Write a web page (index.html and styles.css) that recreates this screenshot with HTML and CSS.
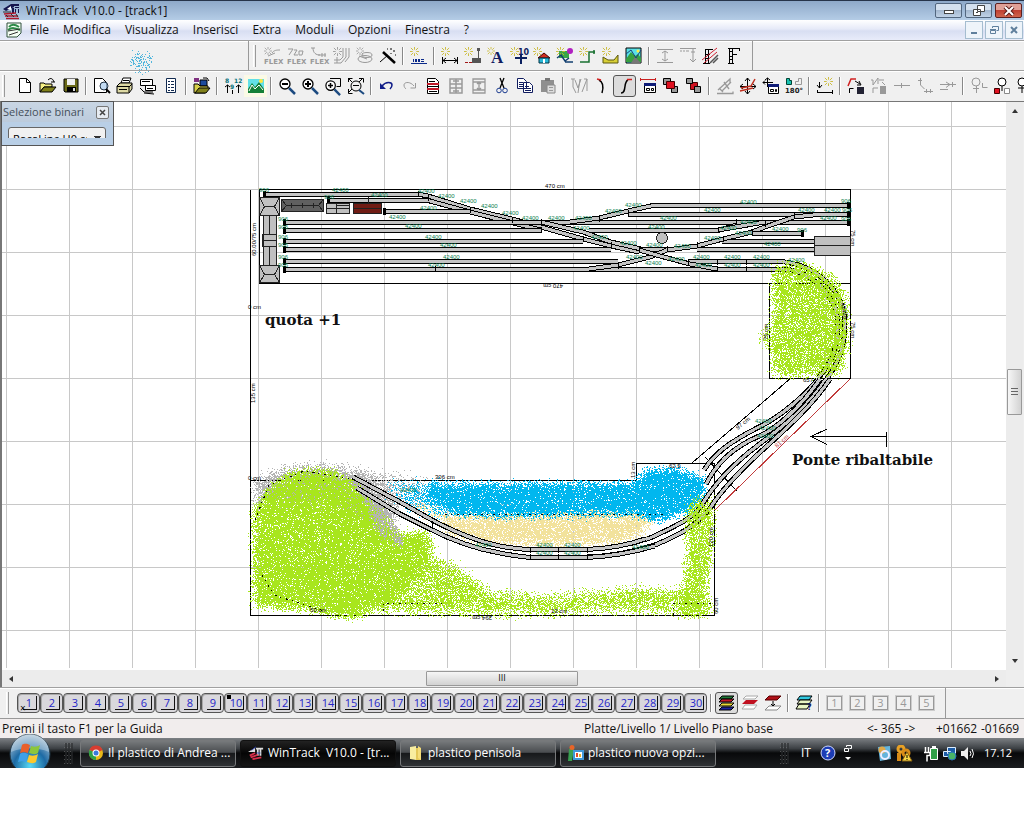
FILE: index.html
```html
<!DOCTYPE html>
<html lang="it">
<head>
    <meta charset="UTF-8">
    <meta name="viewport" content="width=device-width, initial-scale=1"/>
    <title>WinTrack V10.0 - [track1]</title>
    <link rel="stylesheet" href="styles.css">
</head>
<body>

<!-- shared icon pieces -->
<svg class="defs">
    <symbol id="spark" viewBox="0 0 10 10"><path fill="none" d="M5 0v3M5 7v3M0 5h3M7 5h3M1 1l2.500 2.500M6.500 6.500l2.500 2.500M9 1l-2.500 2.500M3.500 6.500l-2.500 2.500"/></symbol>
    <symbol id="logo" viewBox="0 0 18 18"><path d="M1 7l8-5 3 1 0 2-8 4zM9 2h8v2h-8zM10 6h2v5h-2zM13 5h4v1h-4zM13 7h1v4h-1zM16 7h1v4h-1z" fill="#15154d"/><path d="M5 7l4-3v4z" fill="#fff"/><path fill="none" d="M2 12l12-1M3 14h13M4 16.500h13" stroke="#b0182c" stroke-width="1.500"/><path fill="none" d="M1 10h8M4 13l2 2M9 12l3 3M14 12l2 3" stroke="#303030"/></symbol>
    <symbol id="lens" viewBox="0 0 18 18"><circle cx="7" cy="7" r="5" fill="#fff" stroke="#000" stroke-width="1.300"/><path fill="none" d="M11 11l6 6" stroke="#1c4a80" stroke-width="2.500"/></symbol>
</svg>

<div class="window">
    <header class="titlebar">
        <svg class="ico"><use href="#logo"/></svg>
        <h1>WinTrack&nbsp; V10.0 - [track1]</h1>
        <div class="winbtns">
            <button aria-label="Riduci"><svg width="12" height="10"><rect x="1.500" y="4.500" width="9" height="3" fill="#fff" stroke="#444"/></svg></button>
            <button aria-label="Ripristina"><svg width="12" height="11"><path d="M4.500 .5h7v6h-7zM.5 4.500h7v6h-7z" fill="#fff" stroke="#444"/><path d="M3 7h2v1h-2z" fill="#444"/></svg></button>
            <button class="close" aria-label="Chiudi"><svg width="12" height="10"><path d="M2 1l8 8M10 1l-8 8" stroke="#5b1a18" stroke-width="4"/><path d="M2 1l8 8M10 1l-8 8" stroke="#fff" stroke-width="2"/></svg></button>
        </div>
    </header>

    <nav class="menubar">
        <svg class="ico" viewBox="0 0 18 18"><path d="M1 2h14v10l-4 4h-10z" fill="#f4fff4" stroke="#30503c"/><path class="ln" d="M3 6c3-4 7-2 10 0M2 9c4-3 7-2 12 0" stroke="#2c8a48" stroke-width="2"/><path class="ln" d="M2 10l12-2M3 14l9-3" stroke="#333"/></svg>
        <a href="#">File</a>
        <a href="#">Modifica</a>
        <a href="#">Visualizza</a>
        <a href="#">Inserisci</a>
        <a href="#">Extra</a>
        <a href="#">Moduli</a>
        <a href="#">Opzioni</a>
        <a href="#">Finestra</a>
        <a href="#">?</a>
        <div class="mdibtns">
            <button aria-label="Riduci documento"><svg width="10" height="10"><path class="ln" d="M2 8h6" stroke="#5f7f9c" stroke-width="2"/></svg></button>
            <button aria-label="Ripristina documento"><svg width="10" height="10"><path class="ln" d="M3.500 3v-1.500h6v4h-2M1.500 5.500h5v3h-5zM1 4.500h6" stroke="#5f7f9c"/></svg></button>
            <button aria-label="Chiudi documento"><svg width="10" height="10"><path class="ln" d="M2 2l6 6M8 2l-6 6" stroke="#5f7f9c" stroke-width="2"/></svg></button>
        </div>
    </nav>

    <div class="toolbar band">
        <div class="empty"></div>
        <i class="grip"></i>
        <button class="off" aria-label="Flex 1"><svg class="ico"><use href="#spark" width="8" height="8"/><path class="ln" d="M8 6c2-3 5-3 8-3M4 9l7-3"/><text x="0" y="17">FLEX</text></svg></button>
        <button class="off" aria-label="Flex 2"><svg class="ico"><path class="ln" d="M1 2h5l-4 6M7 3h3l-3 5h4M12 4h4l-1 4h-3z"/><text x="0" y="17">FLEX</text></svg></button>
        <button class="off" aria-label="Flex 3"><svg class="ico"><path class="ln" d="M1 1h4M3 1c0 5 3 7 7 7M8 8h8M12 6v4M15 6v4"/><text x="0" y="17">FLEX</text></svg></button>
        <button class="off" aria-label="Binari paralleli"><svg class="ico"><use href="#spark" width="9" height="9"/><path class="ln" d="M10 1v9l-3 3h-6M13 1v9l-5 6h-7M16 1v9l-4 5M4 10v6"/></svg></button>
        <button class="off" aria-label="Elicoidale"><svg class="ico"><use href="#spark" width="8" height="8"/><ellipse class="ln" cx="11" cy="8" rx="5" ry="2.500"/><ellipse class="ln" cx="9" cy="12" rx="7" ry="3.500"/><path class="ln" d="M3 9l8 3"/></svg></button>
        <button aria-label="Bacchetta"><svg class="ico"><path class="ln" d="M4 5l12 11" stroke-width="2.500"/><path class="ln" d="M1 15l8-7M12 1v2M15 3v2M12 6v1M8 2h1M16 8h1"/></svg></button>
        <i class="sep"></i>
        <button aria-label="Inserisci quota"><svg class="ico"><use href="#spark" class="sun" width="9" height="9"/><path d="M3 12h1v3h-1zM5 12h2v3h-2zM8 12h2v3h-2zM11 12h3v1h-3zM11 14h3v1h-3z" fill="#0b2a8a"/><path class="ln" d="M1 16.500h16" stroke="#0b2a8a"/></svg></button>
        <i class="sep"></i>
        <button aria-label="Misura"><svg class="ico"><use href="#spark" class="sun" width="9" height="9"/><path class="ln" d="M1.500 10v7M16.500 10v7M2 13.500h14M5 11l-3 2.500 3 2.500M13 11l3 2.500-3 2.500"/></svg></button>
        <button aria-label="Segnale"><svg class="ico"><use href="#spark" class="sun" width="9" height="9"/><path d="M13 1h3v3h-3zM14 4h1v7h-1zM8 11h9v5h-9z" fill="#555"/><path class="ln" d="M1 15.500h7" stroke="#a01818" stroke-dasharray="3 1"/></svg></button>
        <button aria-label="Testo"><svg class="ico"><use href="#spark" class="sun" width="8" height="8"/><text class="big" x="4" y="16">A</text></svg></button>
        <button aria-label="Altezza"><svg class="ico"><use href="#spark" class="sun" width="9" height="9"/><text class="num" x="8" y="8">10</text><path class="ln" d="M5 11h12M11 8v9" stroke="#0b2060" stroke-width="2"/></svg></button>
        <button aria-label="Edificio"><svg class="ico"><use href="#spark" class="sun" width="9" height="9"/><path d="M5 11l6-5 6 5z" fill="#d03020" stroke="#400"/><path d="M6 11h10v5h-10z" fill="#28b8d8" stroke="#034"/><path d="M10 12h2v4h-2z" fill="#fff"/></svg></button>
        <button aria-label="Paesaggio"><svg class="ico"><path d="M3 4h10v7h-10z" fill="#38a848"/><use href="#spark" class="sun" width="9" height="9"/><circle cx="14" cy="4" r="3" fill="#b020c0"/><path class="ln" d="M1 11l4-3 4 6 4-3M9 15h8" stroke="#123f70" stroke-width="1.500"/></svg></button>
        <button aria-label="Linea"><svg class="ico"><use href="#spark" class="sun" width="9" height="9"/><path class="ln" d="M3 15h7v-10h6M1 15h3M15 3v4" stroke="#187030" stroke-width="1.500"/></svg></button>
        <button aria-label="Terreno"><svg class="ico"><path d="M1 16v-6l5 3 6 0 4-5v8z" fill="#d8cf36" stroke="#5c5810"/><use href="#spark" class="sun" width="9" height="9"/></svg></button>
        <button aria-label="Immagine"><svg class="ico"><path d="M1 1h15v15h-15z" fill="#58e0e8" stroke="#000"/><path d="M1 12l5-7 4 4 3-2 3 4v4h-15z" fill="#38a040"/><path d="M6 16l4-6 6 6z" fill="#777"/><path class="ln" d="M1 7l5-4 5 8 5-8" stroke="#1a407a"/><circle cx="13" cy="4" r="1.500" fill="#ffed40"/></svg></button>
        <i class="sep"></i>
        <button class="off" aria-label="Quota verticale"><svg class="ico"><path class="ln" d="M1 2.500h16M1 15.500h16M9 4v10M6 6l3-2 3 2M6 12l3 2 3-2"/></svg></button>
        <button class="off" aria-label="Quota bordo"><svg class="ico"><path class="ln" d="M1 1.500h16M1 4h2M4 4h2M7 4h3M14 2v13M12 5h4M11 12l3 3 3-3"/></svg></button>
        <button aria-label="Mostra altezze"><svg class="ico"><path class="ln" d="M3.500 2v14M6.500 2v14M1 16.500h7M3 2.500h8M3 7.500h5M3 11.500h3"/><path class="ln" d="M0 13l15-12M2 16l13-11" stroke="#d02030"/><path class="ln" d="M8 16l8-8M11 16l5-5" stroke="#555" stroke-width="1.500"/></svg></button>
        <button aria-label="Altezza binario"><svg class="ico"><path class="ln" d="M4.500 2v15M7.500 2v15M3 1.500h12M14.500 1v3M7 7.500h5M3 16.500h6M4 4.500h3M4 9.500h3M4 12.500h3"/></svg></button>
        <i class="end"></i>
        <svg id="spray" class="spray" width="28" height="26"></svg>
    </div>

    <div class="toolbar">
        <i class="grip first"></i>
        <button aria-label="Nuovo"><svg class="ico"><path d="M3.500 1.500h7l4 4v10h-11z" fill="#fff" stroke="#000"/><path class="ln" d="M10.500 1.500v4h4"/></svg></button>
        <button aria-label="Apri"><svg class="ico"><path d="M1 15v-9h4l1 1h7v3h-8z" fill="#f4ef84" stroke="#000"/><path d="M1 15l4-5h12l-4 5z" fill="#80801a" stroke="#000"/><path class="ln" d="M9 3c3-3 5-1 6 2M12 5h4"/></svg></button>
        <button aria-label="Salva"><svg class="ico"><path d="M2 2h14v13h-13l-1-1z" fill="#6b6a18" stroke="#000"/><path d="M5 2h8v6h-8z" fill="#f0f0f0"/><path d="M5 10h9v5h-9z"/><path d="M11 11h2v3h-2z" fill="#ddd"/></svg></button>
        <i class="sep"></i>
        <button aria-label="Anteprima"><svg class="ico"><path d="M1.500 1.500h8l4 4v10h-12z" fill="#fff" stroke="#000"/><circle cx="11" cy="9" r="4" fill="#ace" fill-opacity=".7" stroke="#234"/><path class="ln" d="M13 12l4 4" stroke-width="2"/></svg></button>
        <button aria-label="Stampa"><svg class="ico"><path d="M5 6l2-5h8l-2 5z" fill="#fff" stroke="#000"/><path d="M1 9l3-3h12v6l-3 4h-12z" fill="#ddd9a4" stroke="#000"/><path class="ln" d="M1 9.500h12v6M7 3.500h6M3 12.500h8M13 10l3-3"/></svg></button>
        <button aria-label="Stampa schermo"><svg class="ico"><path d="M1.500 2.500h12v6h-12zM6.500 8.500h10v5h-10z" fill="#fff" stroke="#000"/><path class="ln" d="M1 11l4 4h9M3 4.500h8M8 11.500h6M5 16l10 1"/></svg></button>
        <button aria-label="Lista parti"><svg class="ico"><path d="M4.500 1.500h9v14h-9z" fill="#fff" stroke="#112a50"/><path class="ln" d="M6 4.500h2M9 4.500h3M6 7.500h2M9 7.500h3M6 10.500h2M9 10.500h3M6 13.500h2M9 13.500h3" stroke="#112a50"/></svg></button>
        <i class="sep"></i>
        <button aria-label="Catalogo"><svg class="ico"><path d="M1 1h5v4h-5z" fill="#803080"/><path d="M7 3h7v6h-7z" fill="#1c4a9c" stroke="#000"/><path class="ln" d="M10 1h4l2 3"/><path d="M1 16v-9h4l2 2h8v2l-3 5z" fill="#d6cf48" stroke="#000"/><path d="M2 16l4-5h11l-4 5z" fill="#80801a" stroke="#000"/></svg></button>
        <i class="sep"></i>
        <button aria-label="Numeri"><svg class="ico"><text class="num teal" x="1" y="6">8</text><text class="num teal" x="10" y="6">12</text><text class="num teal" x="6" y="12">9</text><path class="ln" d="M3.500 8v8M1 10l2.500-2 2.500 2M14.500 8v8M12 10l2.500-2 2.500 2M8.500 13v4"/></svg></button>
        <button class="lit" aria-label="Vista 3D"><svg class="ico"><path d="M1 2h16v14h-16z" fill="#62e0e8"/><path d="M1 16v-4l4-6 3 4 4-5 5 7v4z" fill="#148038"/><path d="M2 14l3-6 3 4 4-4 4 5" fill="none" stroke="#fff"/><circle cx="14" cy="4" r="2" fill="#ffe640"/></svg></button>
        <i class="sep"></i>
        <button aria-label="Zoom meno"><svg class="ico"><use href="#lens" width="18" height="18"/><path class="ln" d="M4 7h6" stroke-width="2"/></svg></button>
        <button aria-label="Zoom piu"><svg class="ico"><use href="#lens" width="18" height="18"/><path class="ln" d="M4 7h6M7 4v6" stroke-width="2"/></svg></button>
        <button aria-label="Zoom area"><svg class="ico"><path class="ln" d="M6 1.500h10.500v8h-4"/><use href="#lens" y="2" width="17" height="17"/><path class="ln" d="M4 8.500h5M6.500 6v5" stroke-width="1.500"/></svg></button>
        <button aria-label="Zoom tutto"><svg class="ico"><path class="ln" d="M1.500 5v-3.500h4M12 1.500h4.500v4M1.500 12v4.500h4M1 1l4 4M16 1l-4 4M1 16l4-4M6 8.500h6"/><circle class="ln" cx="9" cy="9" r="5"/><path class="ln" d="M12 13l5 4" stroke="#1c4a80" stroke-width="2"/></svg></button>
        <i class="sep"></i>
        <button aria-label="Annulla"><svg class="ico"><path class="ln" d="M4 9c4-5 10-4 10-1 0 2-1 3-2 4" stroke="#101d88" stroke-width="1.500"/><path d="M2 6v6h6z" fill="#101d88"/></svg></button>
        <button class="off" aria-label="Ripeti"><svg class="ico"><path class="ln" d="M13 9c-4-5-10-4-10-1 0 2 1 3 2 4"/><path class="ln" d="M14.500 6v5h-5"/></svg></button>
        <button aria-label="Modifica elenco"><svg class="ico"><path d="M3.500 1.500h8l3 3v12h-11z" fill="#fff" stroke="#000"/><path d="M3 6h12v2h-12zM3 11h12v2h-12z" fill="#c01828"/><path class="ln" d="M5 4.500h6M3 9.500h12M5 14.500h8"/></svg></button>
        <button class="off" aria-label="Dividi"><svg class="ico"><path class="ln" d="M3 2h12v14h-12zM3 7h12M3 11h12M9 2v14M6 4h6M6 14h6" stroke-width="1.500"/></svg></button>
        <button class="off" aria-label="Unisci"><svg class="ico"><path class="ln" d="M3 2h12v14h-12zM3 5h12M3 13h12M9 5v8M7 7l2-2 2 2M7 11l2 2 2-2" stroke-width="1.300"/></svg></button>
        <button aria-label="Taglia"><svg class="ico"><path class="ln" d="M7 1l4 10M11 1l-4 10" stroke-width="1.300"/><circle class="ln" cx="6" cy="13.500" r="2.300" stroke="#1c3c90"/><circle class="ln" cx="12" cy="13.500" r="2.300" stroke="#1c3c90"/></svg></button>
        <button aria-label="Copia"><svg class="ico"><path d="M1.500 1.500h6l3 3v7h-9zM7.500 5.500h6l3 3v7h-9z" fill="#fff" stroke="#101d60"/><path class="ln" d="M3 5.500h4M3 7.500h4M3 9.500h4M9 9.500h4M9 11.500h6M9 13.500h6" stroke="#101d60"/></svg></button>
        <button class="off" aria-label="Incolla"><svg class="ico"><path d="M2 3h13v12h-13z" fill="#8f8f8f"/><path d="M6 1h5v3h-5z" fill="#777"/><path d="M8 8h8v8h-8z" fill="#ddd" stroke="#888"/><path class="ln" d="M10 10.500h4M10 13.500h4"/></svg></button>
        <i class="sep"></i>
        <button class="off" aria-label="Geometria"><svg class="ico"><path class="ln" d="M1 2h4M3 2v8l3 6M5 3l3 8 3-9M10 2l-2 14M17 2l-5 13M14 2h3v12"/></svg></button>
        <button aria-label="Curva"><svg class="ico"><path class="ln" d="M6 3c4 2 5 6 3 13" stroke-width="1.500"/><path class="ln" d="M4 2l4 1" stroke="#d02020" stroke-width="1.500"/></svg></button>
        <button class="on" aria-label="Raccordo"><svg class="ico"><path class="ln" d="M5 16c6 0 2-11 7-13" stroke-width="1.500"/><path class="ln" d="M11 2.500h5" stroke="#d02020" stroke-width="1.500"/></svg></button>
        <button aria-label="Proprieta"><svg class="ico"><path class="ln" d="M1.500 1v3M1 2.500h16M16.500 1v3" stroke="#c82020"/><path d="M5.500 6.500h11v9h-11z" fill="#fff" stroke="#000"/><path d="M5 6h12v3h-12z" fill="#101d78"/><path class="ln" d="M7.500 11.500h3v2h-3zM12.500 11.500h2v2h-2z"/></svg></button>
        <button aria-label="Porta avanti"><svg class="ico"><path d="M1.500 1.500h7v6h-7zM9.500 9.500h6v6h-6z" fill="#999" stroke="#000"/><path d="M4.500 4.500h8v7h-8z" fill="#e01020" stroke="#400"/></svg></button>
        <button aria-label="Porta indietro"><svg class="ico"><path d="M5.500 5.500h7v7h-7z" fill="#d01020" stroke="#400"/><path d="M1.500 1.500h6v5h-6zM9.500 9.500h6v6h-6z" fill="#999" stroke="#000"/></svg></button>
        <i class="sep"></i>
        <button class="off" aria-label="Pendenza"><svg class="ico"><path class="ln" d="M1 16.500h16v-2M2 13l12-11v4M6 14l9-9M8 5l5 7M3 11l4 4" stroke-width="1.300"/></svg></button>
        <button aria-label="Sposta"><svg class="ico"><path class="ln" d="M8.500 1v16M1 9.500h16M6 4l2.500-3 2.500 3M6 14l2.500 3 2.500-3M4 7l-3 2.500 3 2.500M14 7l3 2.500-3 2.500"/><path class="ln" d="M2 11l10-2 4-7M1 14l13-3" stroke="#c03020" stroke-width="1.500"/></svg></button>
        <button aria-label="Sposta numerico"><svg class="ico"><path class="ln" d="M5.500 1v9M1 5.500h10M3 3l2.500-2 2.500 2M3 3.500l-2 2 2 2"/><path d="M6.500 7.500h10v9h-10z" fill="#fff" stroke="#000"/><path d="M6 7h11v3h-11z" fill="#101d78"/><path class="ln" d="M8.500 12.500h3v2h-3zM13.500 12.500h1v2h-1z"/></svg></button>
        <button aria-label="Ruota 180"><svg class="ico"><path d="M1.500 1.500h3v2h2v4h-5z" fill="#18c0b0" stroke="#043"/><path class="ln" d="M10.500 7.500v-3h3v-3h3v6z" stroke="#999"/><text class="num dark" x="0" y="16">180°</text></svg></button>
        <i class="sep"></i>
        <button aria-label="Inserisci altezza"><svg class="ico"><use href="#spark" class="sun" x="8" width="9" height="9"/><path class="ln" d="M3.500 5v6M1 8l2.500 3 2.500-3M1 15.500h16M1.500 13v3M16.500 13v4"/></svg></button>
        <i class="sep"></i>
        <button aria-label="Percorso"><svg class="ico"><path class="ln" d="M1 9l3-7h5" stroke="#d02020" stroke-width="1.500"/><path class="ln" d="M2.500 16v-4.500h4M8 4l5 3M12 4l2 4h-4"/><path d="M10 10h7v7h-7z" fill="#223"/></svg></button>
        <button class="off" aria-label="Percorso 2"><svg class="ico"><path class="ln" d="M1 3h2v5l5-7v6M9 3h5M12 5l3 3M3 16v-5h5"/><path d="M10 9h6v8h-6z" fill="#999"/></svg></button>
        <button class="off" aria-label="Dritto"><svg class="ico"><path class="ln" d="M1 8.500h16M8.500 6v5"/></svg></button>
        <button class="off" aria-label="Collega"><svg class="ico"><path class="ln" d="M2 3.500h4M4.500 1v7l4 4M8 14.500h9M10.500 12v4M14.500 12v4"/></svg></button>
        <button class="off" aria-label="Scollega"><svg class="ico"><path class="ln" d="M1 7.500h16M7 5l4 2.500-4 3M1 12.500h8M13.500 5v5"/></svg></button>
        <i class="sep"></i>
        <button class="off" aria-label="Segnale spento"><svg class="ico"><circle class="ln" cx="6" cy="5" r="4"/><path class="ln" d="M6.500 9v7M3 11.500h6M12.500 6v4.500h5"/></svg></button>
        <button aria-label="Segnale"><svg class="ico"><circle cx="9" cy="5" r="4" fill="#fff" stroke="#000"/><path class="ln" d="M9 9v5"/><path d="M1.500 11.500h5v5h-5z" fill="#e01020" stroke="#400"/><path d="M11.500 11.500h5v5h-5z" fill="#fff" stroke="#888"/></svg></button>
        <button aria-label="Segnale singolo"><svg class="ico"><circle cx="6" cy="5" r="4" fill="#fff" stroke="#000"/><path class="ln" d="M6 9v7M2 11h8"/></svg></button>
    </div>

    <main class="workspace">
        <svg id="plan" class="plan">
            <defs>
                <pattern id="grid" width="63" height="63" patternUnits="userSpaceOnUse" x="4" y="126">
                    <path d="M.5 0v63M0 .5h63" stroke="#c8c8c8"/>
                </pattern>
            </defs>
            <g transform="translate(-2 -102)">
                <rect x="0" y="100" width="100%" height="100%" fill="url(#grid)" transform="translate(2 0)"/>
                <!-- baseboards -->
                <path class="edge" d="M259.500 283.500v-94h591v189h-81v-95M259.500 283.500h591M250.500 190v425.500h464v-152h-78v17h-386"/>
                <path class="fine" d="M791 378l-99 85M705 457l32 34"/>
                <path class="fine red" d="M850 379l-135 131"/>
                <g id="tracks"></g>
                <g id="paint"></g>
                <g id="front"></g>
                <path class="dash" d="M383 611v-8h62M673 615v-12h41M445 514h218M255 520l14-35 35-14 45 8M262 575l12 20 50 16"/>
                <!-- buildings -->
                <g class="house">
                    <path d="M259.500 197.500h20v18h-20zM259.500 265.500h20v17h-20zM263.500 215.500h13v50h-13zM262.500 234.500h14v12h-14zM814.500 236.500h36v19h-36z"/>
                    <path class="roof" d="M264 206.500h11M259.500 197.500l5 9-5 9M279.500 197.500l-5 9 5 9M259.500 265.500l5 9-5 8M279.500 265.500l-5 9 5 8M264 274.500h11M269.500 215v19M262 240.500h15M269.500 246v19M814 245.500h36"/>
                    <path class="dark" d="M281.500 199.500h42v12h-42z"/>
                    <path class="roof" d="M281.500 199.500l5 6-5 6M323.500 199.500l-5 6 5 6M286 205.500h32M291.500 203v5M302.500 203v5M313.500 203v5"/>
                    <path d="M326.500 203.500h23v10h-23z"/>
                    <path class="roof" d="M336.500 203v10M327 208.500h22M336 205.500h13"/>
                    <path class="brown" d="M353.500 203.500h28v10h-28z"/>
                    <path class="roof" d="M353 208.500h28M368.500 197v6"/>
                    <circle cx="662" cy="238" r="5.500"/>
                </g>
                <g id="labels"></g>
                <path class="edge" d="M811.500 436.500h75M886.500 432v15M827 429l-16 7.500 16 8"/>
                <text class="note" x="265" y="325">quota +1</text>
                <text class="note" x="792" y="465">Ponte ribaltabile</text>
            </g>
        </svg>

        <div class="vscroll"><i class="arrow up"></i><div class="thumb"></div><i class="arrow down"></i></div>
        <div class="hscroll"><i class="arrow left"></i><div class="thumb">III</div><i class="arrow right"></i></div>

        <section class="palette">
            <div class="palette-head">
                <label for="system">Selezione binari</label>
                <button aria-label="Chiudi pannello"><svg width="9" height="9"><path d="M2 2l5 5M7 2l-5 5" stroke="#444" stroke-width="1.500"/></svg></button>
            </div>
            <div class="cut">
                <select id="system"><option>RocoLine H0 con massicciata</option></select>
            </div>
        </section>
    </main>

    <div class="toolbar layers">
        <i class="grip first"></i>
        <div id="levels" class="levels"></div>
        <i class="sep"></i>
        <button class="on" aria-label="Tutti i livelli"><svg class="ico"><path d="M4 2h12l-3 3h-12z" fill="#207838" stroke="#000"/><path d="M4 5h12l-3 3h-12z" fill="#c01828" stroke="#000"/><path d="M4 9h12l-3 3h-12z" fill="#e8d838" stroke="#000"/><path d="M4 13h12l-3 3h-12z" fill="#1c249c" stroke="#000"/></svg></button>
        <button aria-label="Livello attivo"><svg class="ico"><path d="M5 2h12l-3 3h-12zM4 11h12l-3 4h-12z" fill="#fff" stroke="#aaa"/><path d="M5 6h12l-4 4h-12z" fill="#c01020"/></svg></button>
        <button aria-label="Sposta livello"><svg class="ico"><path d="M5 2h12l-4 4h-12z" fill="#b01018" stroke="#500"/><path d="M5 12h12l-4 4h-12z" fill="#fff" stroke="#888"/><path class="ln" d="M9 7v5M7 10l2 2 2-2"/></svg></button>
        <i class="sep"></i>
        <button aria-label="Info livelli"><svg class="ico"><path d="M5 2h12l-3 4h-12z" fill="#30c8e0" stroke="#000"/><path d="M5 6h12l-3 4h-12zM4 10h11l-3 5h-11z" fill="#e8f4c4" stroke="#000"/><text class="num" x="12" y="16">?</text></svg></button>
        <i class="sep"></i>
        <div id="views" class="levels"></div>
        <i class="end"></i>
    </div>

    <footer class="status">
        <span class="help">Premi il tasto F1 per la Guida</span>
        <span class="place">Platte/Livello 1/ Livello Piano base</span>
        <span class="step">&lt;- 365 -&gt;</span>
        <span class="pos">+01662</span>
        <span class="pos">-01669</span>
    </footer>
</div>

<div class="taskbar">
    <button class="orb" aria-label="Start">
        <svg width="42" height="34">
            <defs><radialGradient id="orb" cx=".5" cy=".8" r=".8"><stop offset="0" stop-color="#58d8f4"/><stop offset=".5" stop-color="#1d6aa4"/><stop offset="1" stop-color="#b4c8d8"/></radialGradient></defs>
            <circle cx="21" cy="20" r="20" fill="url(#orb)" stroke="#203848"/>
            <path d="M2 18a19 19 0 0 1 38 0c-12-5-26-5-38 0z" fill="#fff" fill-opacity=".3"/>
            <path d="M13 11c3-2 5-1 8 0l-2 8c-3-1-5-1-8 0z" fill="#e8602c"/>
            <path d="M22 12c3 1 6 1 9-1l-2 8c-3 2-6 1-9 0z" fill="#8cc63c"/>
            <path d="M11 20c3-2 5-1 8 0l-2 8c-3-1-5-1-8 0z" fill="#3ea0e8"/>
            <path d="M20 21c3 1 6 1 9-1l-2 8c-3 2-6 1-9 0z" fill="#fcc82c"/>
        </svg>
    </button>
    <i class="dots"></i>
    <div class="tasks">
        <button><svg width="16" height="16"><circle cx="8" cy="8" r="7" fill="#e8b818"/><path d="M8 8l-6.500-3a7 7 0 0 1 13 0z" fill="#d83c30"/><path d="M8 8l0 7a7 7 0 0 1-6.500-10z" fill="#30a048"/><circle cx="8" cy="8" r="3.500" fill="#fff"/><circle cx="8" cy="8" r="2.500" fill="#3a78dc"/></svg>Il plastico di Andrea ...</button>
        <button class="active"><svg width="16" height="16" viewBox="0 0 18 18"><path d="M0 8l8-5v5zM9 3h8v2h-2v7h-2v-7h-1v7h-2v-7h-1z" fill="#ddd"/><path class="ln" d="M2 12l6-3M3 14l8-3M5 16l10-2" stroke="#d8304c" stroke-width="2"/><path class="ln" d="M4 6l5-4M10 9h4" stroke="#2840b8"/></svg>WinTrack&nbsp; V10.0 - [tr...</button>
        <button><svg width="16" height="16"><path d="M2 2l6-1v14l-6-1z" fill="#f8eda0"/><path d="M8 3h5v12h-5z" fill="#e4c858"/><path d="M10 1l3 2v12l-3-2z" fill="#f5dd78"/></svg>plastico penisola</button>
        <button><svg width="16" height="16"><path d="M1 4h5l-2 12h-4z" fill="#38a050"/><circle cx="4" cy="2.500" r="2.500" fill="#e86428"/><path d="M5 5h11v10h-11z" fill="#4098d8"/><path d="M7 7h7v6h-7z" fill="#fff"/><path d="M8 8h2v4h-2z" fill="#e04c28"/><path d="M11 9h2v3h-2z" fill="#e8b428"/></svg>plastico nuova opzi...</button>
    </div>
    <div class="tray">
        <i class="dots"></i>
        <span class="lang">IT</span>
        <svg width="16" height="16"><circle cx="8" cy="8" r="7" fill="#1c3cb4" stroke="#cfd8ff"/><text class="q" x="5" y="12">?</text></svg>
        <svg class="lb" width="12" height="18"><path class="ln" d="M4.500 3v-1.500h5v3h-2M2.500 4.500h4v3h-4z" stroke="#fff"/><path d="M3 13h6l-3 3z" fill="#fff"/></svg>
        <svg width="17" height="17"><path d="M2 2l12-1 1 13-11 2z" fill="#64b4dc"/><circle cx="6" cy="5" r="3.500" fill="#e0a848"/><circle class="ln" cx="9" cy="10" r="4" stroke="#eef" stroke-width="2"/></svg>
        <svg class="alert" width="17" height="17"><circle cx="5" cy="4" r="3" fill="none" stroke="#e8a024" stroke-width="3"/><circle cx="10" cy="8" r="3" fill="none" stroke="#d88c18" stroke-width="3"/><path d="M1 8h4v8h-4z" fill="#d88c18"/><path d="M11 7l5 9h-10z" fill="#f8d848" stroke="#876010"/><path d="M11 10v3M11 14v1" stroke="#000"/></svg>
        <svg width="15" height="17"><path d="M6.500 3.500h7v11h-7z" fill="#30a048" stroke="#fff"/><path d="M8 1h4v2h-4z" fill="#fff"/><path class="ln" d="M1.500 2v5M4.500 2v5M0 7.500h6v3h-3v6" stroke="#fff" stroke-width="1.500"/></svg>
        <svg width="15" height="17"><path d="M5.500 2.500h8v6h-8zM1.500 6.500h7v5h-7z" fill="#1c5ca8" stroke="#def"/><circle cx="10" cy="11" r="4" fill="#48b468" stroke="#2470bc"/></svg>
        <svg width="15" height="17"><path d="M1 6h3l4-4v13l-4-4h-3z" fill="#eee"/><path class="ln" d="M10 6q2 3 0 5M12 4q3 5 0 9" stroke="#fff"/></svg>
        <time>17.12</time>
    </div>
</div>

<script src="plan.js"></script>
</body>
</html>
```
FILE: styles.css
```css
*{
    box-sizing: border-box;
}
body{
    margin: 0 6px 0 0;
    background: #fff;
    font-family: "Open Sans", "Noto Sans", sans-serif;
    font-size: 12px;
    line-height: 16px;
    color: #111;
}
button{
    font: inherit;
    padding: 0;
    border: 0;
    background: none;
    color: inherit;
}
svg{
    display: block;
    flex: none;
}
.defs{
    position: absolute;
    width: 0;height: 0;
}
.ico{
    width: 18px;height: 18px;
    overflow: visible;
}
.ln{
    fill: none;
}
.ln:not([stroke]){
    stroke: currentColor;
}
.sun{
    stroke: #c8b830;
}
.off use{
    stroke: #999;
}
.window{
    background: #f0f0f0;
}

/* title and menu */
.titlebar{
    display: flex;align-items: center;
    height: 20px;
    padding-left: 2px;
    border-top: 1px solid #26344a;
    background: linear-gradient(#8ea9c9, #b4cce6);
}
.titlebar h1{
    margin: 0 0 0 6px;
    font-size: 12px;font-weight: normal;
}
.winbtns{
    display: flex;gap: 3px;
    margin: 0 2px 0 auto;
}
.winbtns button{
    display: flex;align-items: center;justify-content: center;
    width: 27px;height: 15px;
    border: 1px solid #53677f;border-radius: 2px;
    background: linear-gradient(#d4e0ee 45%, #a4b8d0 50%, #c0d2e6);
}
.winbtns .close{
    background: linear-gradient(#e0a097 45%, #bf4032 50%, #d0644c);
    border-color: #5c2020;
}
.menubar{
    display: flex;align-items: center;gap: 14px;
    height: 20px;
    padding-left: 6px;
    background: linear-gradient(#fff, #e6eaf8 45%, #d8def2 55%, #e8ecfa);
}
.menubar .ico{
    margin-right: -8px;
}
.menubar a{
    color: #111;text-decoration: none;
}
.mdibtns{
    display: flex;gap: 2px;
    margin: 0 1px 0 auto;
}
.mdibtns button{
    display: flex;align-items: center;justify-content: center;
    width: 18px;height: 18px;
    border: 1px solid #a5bdd0;
    background: #eef4fa;
}

/* toolbars */
.toolbar{
    display: flex;align-items: center;
    height: 31px;
    overflow: hidden;
    border-top: 1px solid #a0a0a0;
    box-shadow: inset 0 1px #fff;
}
.toolbar button{
    display: flex;align-items: center;justify-content: center;
    flex: none;
    width: 23px;height: 22px;
    color: #000;
}
.toolbar .off{
    color: #999;
}
.toolbar .on{
    border: 1px solid #555;border-radius: 3px;
    background: #dcdcdc;
}
.toolbar .lit{
    background: #fbfae6;
}
.band{
    position: relative;
    height: 30px;
    overflow: visible;
}
.empty{
    width: 249px;height: 100%;
    border-right: 1px solid #999;
}
.grip{
    flex: none;
    width: 3px;height: 22px;
    margin: 0 5px 0 4px;
    border-right: 1px solid #999;
    border-left: 1px solid #fff;
}
.grip.first{
    margin: 0 8px 0 2px;
}
.sep{
    flex: none;
    width: 8px;height: 18px;
    background: linear-gradient(90deg, transparent 3px, #888 3px, #888 4px, #fff 4px, #fff 5px, transparent 5px);
}
.end{
    width: 8px;height: 100%;
    border-right: 1px solid #999;
}
.toolbar text{
    font: bold 7px "DejaVu Sans", sans-serif;
    fill: currentColor;
}
.toolbar .big{
    font: bold 17px "Liberation Serif", serif;
    fill: #101d60;
}
.toolbar .num{
    font-size: 8px;
    fill: #101d60;
}
.toolbar .teal{
    font-size: 6px;
    fill: #087078;
}
.toolbar .dark{
    font-size: 7px;
    fill: #222;
}
.spray{
    position: absolute;
    left: 127px;top: 8px;
}

/* drawing area */
.workspace{
    position: relative;
    display: grid;
    grid-template-columns: 1fr 17px;
    grid-template-rows: auto 17px;
    border: solid #777;
    border-width: 1px 0 0 2px;
    padding-right: 1px;
    background: #eee;
}
.plan{
    width: 100%;height: 568px;
    background: #fff;
    shape-rendering: crispEdges;
}
.edge, .fine, .dash{
    fill: none;
    stroke: #000;
}
.dash{
    stroke-dasharray: 2 4 1 5;
}
.red{
    stroke: #c03a3a;
}
.rail{
    fill: none;
    stroke: #000;
    stroke-width: 5;
}
.bed{
    fill: none;
    stroke: #c4c4c4;
    stroke-width: 3;
}
.house{
    fill: #c0c0c0;
    stroke: #222;
}
.house .roof{
    fill: none;
}
.house .dark{
    fill: #606060;
}
.house .brown{
    fill: #701c14;
}
.code, .size{
    font: 6px "Liberation Sans", sans-serif;
    fill: #088050;
}
.size{
    fill: #000;
}
.size.warn{
    fill: #c03a3a;
}
.note{
    font: bold 15px "DejaVu Serif", serif;
    fill: #111;
}
.vscroll, .hscroll{
    display: flex;align-items: center;
    background: #ececec;
}
.vscroll{
    flex-direction: column;
    padding: 7px 0;
}
.hscroll{
    padding: 0 7px;
}
.thumb{
    border: 1px solid #999;border-radius: 1px;
    background: linear-gradient(#f6f6f6, #d2d2d2);
}
.vscroll .thumb{
    width: 15px;height: 46px;
    margin: 256px 0 auto;
    background: repeating-linear-gradient(#666 0 1px, transparent 1px 3px) center / 7px 8px no-repeat, linear-gradient(90deg, #f6f6f6, #d2d2d2);
}
.hscroll .thumb{
    width: 152px;height: 15px;
    margin: 0 auto 0 413px;
    font-size: 9px;line-height: 12px;text-align: center;
}
.arrow{
    border: 3px solid transparent;
}
.up{
    border-bottom: 4px solid #333;border-top: 0;
}
.down{
    border-top: 4px solid #333;border-bottom: 0;
}
.left{
    border-right: 4px solid #333;border-left: 0;
}
.right{
    border-left: 4px solid #333;border-right: 0;
}
.palette{
    position: absolute;
    left: -1px;top: -1px;
    width: 113px;height: 45px;
    border: 1px solid #555;
    background: #b9cfe6;
}
.palette-head{
    display: flex;align-items: center;justify-content: space-between;
    height: 20px;
    padding: 0 4px 0 1px;
    background: linear-gradient(#c9d6e4, #bccbdc);
    color: #454f5b;
    font-size: 11px;
}
.palette-head button{
    display: flex;align-items: center;justify-content: center;
    width: 13px;height: 13px;
    border: 1px solid #777;border-radius: 2px;
    background: #e6ebf1;
}
.cut{
    height: 11px;
    overflow: hidden;
    margin: 5px 7px 0 6px;
}
.cut select{
    appearance: none;
    width: 100%;height: 22px;
    padding: 0 18px 0 4px;
    border: 1px solid #666;border-radius: 3px;
    background: linear-gradient(#333, #333) 85px 8px / 7px 1px no-repeat, linear-gradient(#333, #333) 86px 9px / 5px 1px no-repeat, #f1f1f1;
    font: 11px "Open Sans", sans-serif;
}

/* level buttons */
.layers .first{
    margin: 0 8px 0 6px;
}
.levels{
    display: flex;
    font-size: 11px;
}
.levels .key{
    position: relative;
    height: 20px;
    border: 1px solid #555;border-radius: 4px;
    box-shadow: inset 1px 1px #aaa;
    background: #d9d8dc;
    color: #2424c8;
}
.levels .key span{
    min-width: 14px;
    margin-left: 2px;
    border-right: 1px solid #111;
    border-bottom: 1px solid #111;
    line-height: 13px;
    text-align: center;
}
.key.base::after{
    content: "×";
    position: absolute;
    left: 2px;bottom: 0;
    color: #000;
    font-size: 10px;line-height: 8px;
}
.key.current::after{
    content: "";
    position: absolute;
    left: 2px;top: 1px;
    width: 4px;height: 4px;
    background: #000;
}
.levels .off span{
    width: 15px;
    border: 1px solid #999;
    outline: 1px solid #ccc;
    line-height: 12px;
    text-align: center;
}

.status{
    display: flex;align-items: center;
    height: 20px;
    border-top: 1px solid #999;
    background: #f1eded;
}
.help{
    padding-left: 2px;
    margin-right: auto;
}
.place{
    width: 283px;
}
.step{
    width: 69px;
}
.pos{
    width: 45px;
}
.pos:last-child{
    width: 43px;
}

/* taskbar */
.taskbar{
    position: relative;
    display: flex;align-items: center;
    height: 30px;
    padding-left: 64px;
    background: linear-gradient(#7c8084, #3c4044 35%, #08090a 50%, #1b1d20);
    color: #fff;
}
.orb{
    position: absolute;
    left: 9px;top: -4px;
}
.dots{
    width: 9px;height: 21px;
    background: repeating-linear-gradient(90deg, transparent 0 1px, #2a2c2e 1px 3px) , repeating-linear-gradient(#777 0 1px, transparent 1px 4px);
    opacity: .6;
}
.tasks{
    display: flex;gap: 4px;
    margin-left: 7px;
}
.tasks button{
    display: flex;align-items: center;gap: 4px;
    width: 156px;height: 27px;
    padding-left: 7px;
    border: 1px solid #77797b;border-radius: 3px;
    background: linear-gradient(#777a7c, #4a4d50 45%, #17191b 50%, #303336);
    white-space: nowrap;
}
.tasks .active{
    background: linear-gradient(#222, #050505 50%, #161616);
    border-color: #111;
}
.tray{
    display: flex;align-items: center;gap: 3px;
    margin: 0 12px 0 auto;
}
.lang{
    margin: 0 6px 0 9px;
}
.lb{
    margin: 0 19px 0 3px;
}
.alert{
    margin-right: 8px;
}
.tray time{
    margin-left: 6px;
    font-size: 11px;
}
.q{
    font: bold 11px "Open Sans", sans-serif;
    fill: #fff;
}
```
FILE: plan.js
```javascript
const NS = "http://www.w3.org/2000/svg";

function add(parent, tag, attrs, text){
    const el = document.createElementNS(NS, tag);
    for(const k in attrs) el.setAttribute(k, attrs[k]);
    if(text) el.textContent = text;
    parent.appendChild(el);
}

// rails in black with the grey bed between them
function drawTracks(id, list){
    const g = document.getElementById(id);
    list.forEach(d => {
        add(g, "path", {class: "rail", d: d});
        add(g, "path", {class: "bed", d: d});
    });
}

drawTracks("tracks", [
    "M264 194.500H420L428 196L470 209L512 219L541 227L583 239L611 246L639 252",
    "M328 200.500H428L470 212L541 230",
    "M384 211.500H470",
    "M284 222.500H848",
    "M284 230.500H541",
    "M589 230.500H718L737 225",
    "M541 222L583 232L611 242L641 249",
    "M284 241.500H583",
    "M284 249.500H611",
    "M722 241.500H814",
    "M639 249.500H667",
    "M697 249.500H814",
    "M284 261.500H618",
    "M688 261.500H780",
    "M284 269.500H780",
    "M570 222L599 218L628 211L653 205.500H848",
    "M628 214.500H848",
    "M667 250L697 246L723 239L752 232L765 227L794 217L823 214",
    "M752 233.500H802",
    "M589 269L618 265L650 257L667 250",
    "M639 250L660 256L690 264L717 269",
    "M718 230L765 222",
    "M780 261.500C815 264 845 290 845 325C845 350 835 368 826 380",
    "M780 269C810 269 838 295 838 325C838 350 830 365 818 378",
    "M706 500C695 515 690 520 650 538Q620 548 587 549.500",
    "M712 506C700 520 692 530 655 545Q620 556 587 557"
]);

drawTracks("front", [
    "M818 379C797 405 770 422 757 428C728 443 714 454 704 470",
    "M820 379C800 408 775 430 757 437C730 449 716 465 706 484",
    "M826 379C806 410 778 430 757 446C733 464 716 482 703 503",
    "M830 379C812 406 787 428 757 455C733 478 720 492 711 507",
    "M353 477L400 502L432 520Q470 540 500 546Q515 549 530 549.500H587Q620 548 645 539",
    "M357 488L400 514L430 529Q465 547 500 553Q515 556 530 557.500H587Q620 556 655 546"
]);

// buffer stops and joints
const front = document.getElementById("front");
[[264,194],[328,200],[384,211],[284,222],[284,230],[284,241],[284,249],[284,261],[284,269],
 [848,205],[848,214],[848,222],[802,233]].forEach(p => {
    add(front, "rect", {x: p[0] - 1, y: p[1] - 3, width: 3, height: 7});
});
[[418,194],[428,198],[470,210],[512,220],[541,222],[541,230],[583,239],[611,245],[639,250],[667,249],
 [697,245],[723,239],[752,232],[765,224],[794,216],[628,213],[599,219],[618,266],[688,262],[717,262],
 [746,262],[717,269],[746,269],[435,269],[530,550],[558,550],[587,550],[530,557],[558,557],[587,557],
 [736,222],[718,230],[432,524]].forEach(p => {
    add(front, "rect", {x: p[0], y: p[1] - 3, width: 1, height: 6});
});

// article numbers
const labels = document.getElementById("labels");
[[332,192],[371,197],[420,210],[389,219],[405,228],[425,239],[440,247],[443,259],[428,267],
 [418,193],[438,198],[460,203],[481,208],[502,215],[522,220],[548,220],[575,220],[573,230],
 [591,239],[620,245],[646,247],[674,248],[704,240],[735,235],[740,204],[704,212],[660,220],
 [648,229],[605,213],[625,207],[720,230],[740,224],[798,212],[824,212],[820,220],[772,231],
 [764,246],[626,259],[645,265],[668,261],[693,259],[724,259],[753,259],[695,267],[724,267],
 [753,267],[788,262],[536,547],[564,547],[536,555],[564,555],[400,492],[475,547],[632,549],
 [755,423],[759,430],[757,438]].forEach(p => {
    add(labels, "text", {class: "code", x: p[0], y: p[1]}, "42400");
});
[[259,192],[278,221],[278,229],[278,239],[278,247],[278,259],[278,267],[841,203],[842,212],[841,221],[797,232],[324,199]]
    .forEach(p => add(labels, "text", {class: "code", x: p[0], y: p[1]}, "906"));

[[545,188,0,"470 cm"],[563,284,180,"470 cm"],[256,256,-90,"60.00/75 cm"],[255,403,-90,"135 cm"],[248,309,0,"0 cm"],
 [248,480,0,"0 cm"],[435,479,0,"306 cm"],[635,478,-90,"13 cm"],[669,468,0,"62.9"],[713,547,-90,"120 cm"],
 [718,614,-90,"60 cm"],[551,613,0,"13 cm"],[310,612,0,"50 cm"],[492,616,180,"294 cm"],[768,340,-90,"75 cm"],
 [851,322,90,"75 cm"],[851,230,90,"75 cm"],[803,382,0,"657"],[738,430,-40,"97 cm"],[841,303,80,"42425"]]
    .forEach(t => add(labels, "text", {class: "size", transform: `translate(${t[0]} ${t[1]}) rotate(${t[2]})`}, t[3]));
add(labels, "text", {class: "size warn", transform: "translate(777 448) rotate(-42)"}, "81 cm");

// ---- airbrush ----
let seed = 7;
function rnd(){
    seed = (seed * 1664525 + 1013904223) % 4294967296;
    return seed / 4294967296;
}
function inside(x, y, poly){
    let hit = false;
    for(let i = 0, j = poly.length - 1; i < poly.length; j = i++){
        const [ax, ay] = poly[i], [bx, by] = poly[j];
        if((ay > y) !== (by > y) && x < (bx - ax) * (y - ay) / (by - ay) + ax) hit = !hit;
    }
    return hit;
}
// density = dots per pixel, soft = how far a dot may stray over the edge
function airbrush(parent, color, density, soft, poly){
    const xs = poly.map(p => p[0]), ys = poly.map(p => p[1]);
    const x0 = Math.min(...xs), x1 = Math.max(...xs), y0 = Math.min(...ys), y1 = Math.max(...ys);
    const dots = new Set();
    const n = (x1 - x0) * (y1 - y0) * density;
    for(let i = 0; i < n; i++){
        const x = x0 + rnd() * (x1 - x0), y = y0 + rnd() * (y1 - y0);
        if(!inside(x, y, poly)) continue;
        const dx = (rnd() + rnd() - 1) * soft, dy = (rnd() + rnd() - 1) * soft;
        dots.add(Math.round(x + dx) + " " + Math.round(y + dy));
    }
    add(parent, "path", {fill: color, d: [...dots].map(p => "M" + p + "h1v1h-1z").join("")});
}

const paint = document.getElementById("paint");
const GREEN = "#a8e61d", BLUE = "#00b7ef", SAND = "#f2e29c", GREY = "#b4b4b4";

airbrush(paint, GREEN, 1.5, 9, [[776,267],[800,265],[828,276],[843,295],[846,340],[838,372],[774,373],[774,350],[775,285]]);
airbrush(paint, GREEN, .5, 8, [[760,334],[776,322],[776,352],[764,348]]);
airbrush(paint, GREY, 1.3, 10, [[256,482],[285,470],[325,467],[365,473],[385,487],[395,497],[390,530],[330,500],[258,502]]);
airbrush(paint, GREY, .4, 12, [[365,474],[425,480],[425,500],[390,498]]);
airbrush(paint, BLUE, .7, 12, [[390,486],[440,484],[440,515],[420,508],[398,498]]);
airbrush(paint, BLUE, 2.6, 8, [[430,486],[636,485],[645,472],[672,470],[700,478],[704,490],[690,508],[655,519],[630,513],[500,516],[450,512],[428,495]]);
airbrush(paint, SAND, 1.8, 9, [[440,518],[500,519],[590,516],[640,518],[650,525],[625,540],[540,543],[480,541],[450,530]]);
airbrush(paint, SAND, .5, 8, [[410,500],[430,508],[450,522],[430,520]]);
airbrush(paint, GREEN, 2.3, 9, [[256,510],[270,490],[290,474],[330,472],[352,484],[370,500],[395,536],[425,533],[430,550],[425,562],[400,590],[385,604],[350,616],[310,607],[256,604]]);
airbrush(paint, GREEN, 1.2, 10, [[420,558],[445,563],[490,594],[540,598],[640,590],[690,593],[705,612],[640,608],[500,612],[380,608],[385,590]]);
airbrush(paint, GREEN, 1.4, 8, [[688,512],[696,500],[712,500],[710,545],[705,590],[710,612],[680,614],[688,560]]);
// loose grey strokes down the hill
airbrush(paint, GREY, 1.3, 5, [[350,480],[362,480],[380,505],[388,540],[378,530],[366,500]]);
airbrush(paint, GREY, 1.3, 5, [[362,484],[376,496],[402,540],[398,546],[386,520]]);

const puff = [];
for(let a = 0; a < 12; a++) puff.push([14 + 10 * Math.cos(a * Math.PI / 6), 13 + 10 * Math.sin(a * Math.PI / 6)]);
airbrush(document.getElementById("spray"), "#52b6dc", .4, 6, puff);

// ---- level keys ----
const levels = document.getElementById("levels");
for(let i = 1; i <= 30; i++){
    const extra = i === 1 ? " base" : i === 10 ? " current" : "";
    levels.insertAdjacentHTML("beforeend", `<button class="key${extra}"><span>${i}</span></button>`);
}
const views = document.getElementById("views");
for(let i = 1; i <= 5; i++){
    views.insertAdjacentHTML("beforeend", `<button class="off"><span>${i}</span></button>`);
}
```
